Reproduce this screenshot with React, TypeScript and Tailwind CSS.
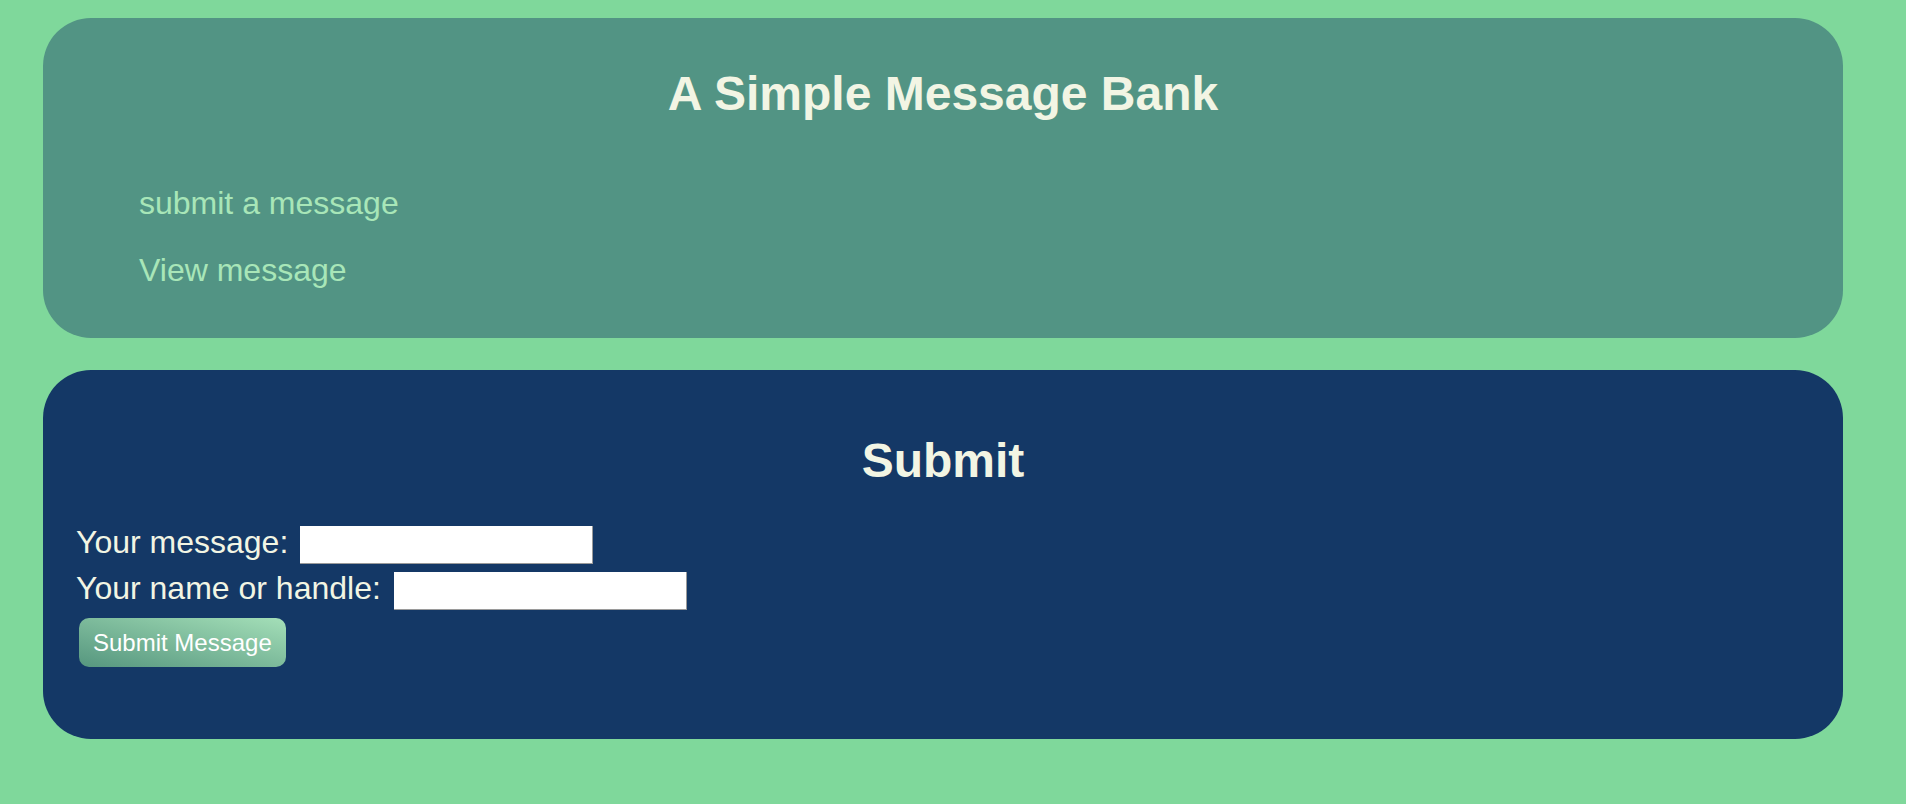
import React, { useState } from 'react';

function NavCard() {
  return (
    <div className="w-[1800px] rounded-[48px] bg-[#529484] pt-[48px] pb-[49px]">
      <h1 className="text-center text-[48px] leading-[56px] font-bold text-[#f2f5e4]">
        A Simple Message Bank
      </h1>
      <ul className="mt-[63px] pl-[96px] flex flex-col gap-[30px]">
        <li>
          <a href="#submit" className="text-[32px] leading-[37px] text-[#a8e6b8] no-underline">
            submit a message
          </a>
        </li>
        <li>
          <a href="#view" className="text-[32px] leading-[37px] text-[#a8e6b8] no-underline">
            View message
          </a>
        </li>
      </ul>
    </div>
  );
}

function SubmitCard() {
  const [message, setMessage] = useState('');
  const [handle, setHandle] = useState('');

  return (
    <div className="w-[1800px] rounded-[48px] bg-[#143866] pt-[63px] pb-[72px] pl-[33px]">
      <h2 className="-ml-[33px] text-center text-[48px] leading-[56px] font-bold text-[#f2f5e4]">
        Submit
      </h2>
      <form className="mt-[33px]" onSubmit={(e) => e.preventDefault()}>
        <div className="flex items-start h-[46px]">
          <label className="mt-[2px] text-[32px] leading-[37px] text-[#f2f5e4]">Your message:</label>
          <input
            value={message}
            onChange={(e) => setMessage(e.target.value)}
            className="ml-[12px] mt-[4px] w-[293px] h-[38px] bg-white border-b border-r border-[#9a9a9a] outline-none px-1 text-base text-black"
          />
        </div>
        <div className="flex items-start h-[46px]">
          <label className="mt-[2px] text-[32px] leading-[37px] text-[#f2f5e4]">Your name or handle:</label>
          <input
            value={handle}
            onChange={(e) => setHandle(e.target.value)}
            className="ml-[13px] mt-[4px] w-[293px] h-[38px] bg-white border-b border-r border-[#9a9a9a] outline-none px-1 text-base text-black"
          />
        </div>
        <button
          type="submit"
          className="ml-[3px] mt-[4px] h-[49px] px-[14px] rounded-[10px] bg-gradient-to-tr from-[#56977f] to-[#a4dfb8] text-[24px] leading-[28px] text-white"
        >
          Submit Message
        </button>
      </form>
    </div>
  );
}

export default function App() {
  return (
    <div className="min-h-screen bg-[#7fd89b] pt-[18px] pl-[43px] font-['Liberation_Sans',Arial,Helvetica,sans-serif]">
      <div className="flex flex-col gap-[32px]">
        <NavCard />
        <SubmitCard />
      </div>
    </div>
  );
}
